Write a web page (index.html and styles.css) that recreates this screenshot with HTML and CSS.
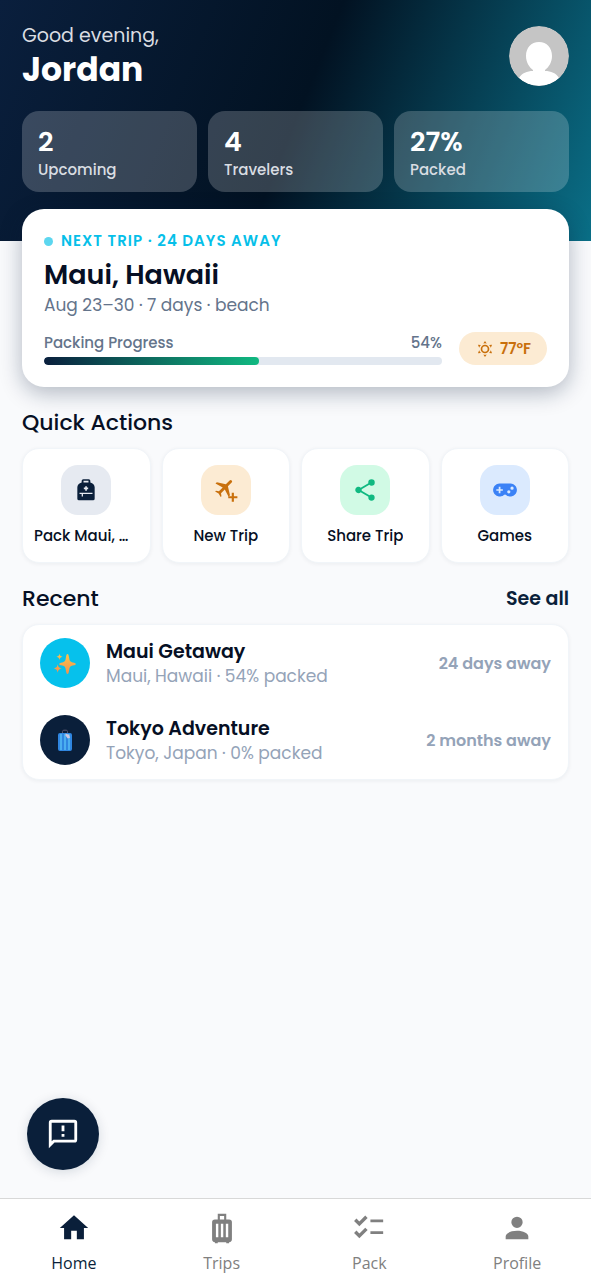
FILE: index.html
```html
<!DOCTYPE html>
<html lang="en">
<head>
<meta charset="utf-8">
<meta name="viewport" content="width=device-width, initial-scale=1">
<title>Home</title>
<link rel="stylesheet" href="styles.css">
</head>
<body>
<header class="hero">
  <div class="hero-top">
    <div>
      <p class="greeting">Good evening,</p>
      <h1 class="name">Jordan</h1>
    </div>
    <button class="avatar" type="button" aria-label="Account">
      <svg viewBox="0 0 60 60"><circle cx="30" cy="30" r="30" fill="#c5c5c5"/><path d="M30 16c-8 0-13 6-13 14 0 6 3 11 7 14v1c-6 0-11 2-14 7a30 30 0 0 0 40 0c-3-5-8-7-14-7v-1c4-3 7-8 7-14 0-8-5-14-13-14z" fill="#fff"/></svg>
    </button>
  </div>
  <div class="stats">
    <div class="stat"><span class="stat-value">2</span><span class="stat-label">Upcoming</span></div>
    <div class="stat"><span class="stat-value">4</span><span class="stat-label">Travelers</span></div>
    <div class="stat"><span class="stat-value">27%</span><span class="stat-label">Packed</span></div>
  </div>
</header>

<main class="content">
  <section class="trip">
    <p class="trip-tag"><span class="dot"></span>NEXT TRIP · 24 DAYS AWAY</p>
    <h2 class="trip-title">Maui, Hawaii</h2>
    <p class="trip-meta">Aug 23–30 · 7 days · beach</p>
    <div class="trip-foot">
      <div class="progress">
        <div class="progress-head"><span>Packing Progress</span><span>54%</span></div>
        <div class="track"><div class="fill" style="width:54%"></div></div>
      </div>
      <span class="weather">
        <svg viewBox="0 0 24 24" width="16" height="16" fill="currentColor"><path fill-rule="evenodd" d="M12 5.500a6.500 6.500 0 1 1 0 13 6.500 6.500 0 0 1 0-13m0 2.500a4 4 0 1 0 0 8 4 4 0 0 0 0-8M12 0l2.600 3.700a10 10 0 0 0-5.200 0zM12 24l2.600-3.700a10 10 0 0 1-5.200 0zM1.400 5.700l4.500.4a9 9 0 0 0-2.600 4.100zM22.600 5.700l-4.500.4a9 9 0 0 1 2.600 4.100zM1.400 18.300l4.500-.4a9 9 0 0 1-2.600-4.100zM22.600 18.300l-4.500-.4a9 9 0 0 0 2.600-4.100z"/></svg>
        77°F
      </span>
    </div>
  </section>

  <h2 class="heading">Quick Actions</h2>
  <div class="actions">
    <button class="action" type="button">
      <span class="tile tile-navy"><svg viewBox="0 0 24 24" width="26" height="26"><path fill="#0a1f3a" fill-rule="evenodd" d="M9.500 2h5A1.500 1.500 0 0 1 16 3.500V5c2.400.5 4 2.300 4 4.500V20a1.500 1.500 0 0 1-1.500 1.500h-13A1.500 1.500 0 0 1 4 20V9.500C4 7.300 5.600 5.500 8 5V3.500A1.500 1.500 0 0 1 9.500 2m.2 1.500V5h4.600V3.500zM11.300 8.500v1.300H10v1.600h1.300v1.300h1.500v-1.300H14V9.800h-1.200V8.500zM6 14.500v1.200h2V18h1.200v-2.300H18v-1.200z"/></svg></span>
      <span class="action-label">Pack Maui, Hawaii</span>
    </button>
    <button class="action" type="button">
      <span class="tile tile-orange"><svg viewBox="0 0 24 24" width="26" height="26" fill="#c9700c"><path transform="translate(.5 -1.500) rotate(45 10 11) scale(.9)" d="M21 16v-2l-8-5V3.500a1.500 1.500 0 0 0-3 0V9l-8 5v2l8-2.500V19l-2.500 1.800V22l4-1 4 1v-1.200L13 19v-5.500z"/><path d="M17.300 14.500h2v3.200h3.200v2h-3.200v3.200h-2v-3.200h-3.200v-2h3.200z"/></svg></span>
      <span class="action-label">New Trip</span>
    </button>
    <button class="action" type="button">
      <span class="tile tile-green"><svg viewBox="0 0 24 24" width="26" height="26" fill="#10b981"><path d="M18 16.080c-.76 0-1.440.3-1.960.77L8.910 12.700c.05-.23.09-.46.09-.7s-.04-.47-.09-.7l7.050-4.110c.54.5 1.250.81 2.040.81a3 3 0 1 0-3-3c0 .24.04.47.09.7L8.040 9.810A3 3 0 1 0 6 15c.79 0 1.500-.31 2.040-.81l7.120 4.150c-.05.21-.08.43-.08.66a2.920 2.920 0 1 0 2.920-2.920z"/></svg></span>
      <span class="action-label">Share Trip</span>
    </button>
    <button class="action" type="button">
      <span class="tile tile-blue"><svg viewBox="0 0 24 24" width="26" height="26" fill="#3b82f6"><path fill-rule="evenodd" d="M7 6h10a6 6 0 1 1-4 10.500q-1-.8-2 0A6 6 0 1 1 7 6M6.200 9v2.200H4v1.600h2.200V15h1.600v-2.200H10v-1.600H7.800V9zM18.500 8.800a1.500 1.500 0 1 0 0 3 1.500 1.500 0 0 0 0-3m-3 3.400a1.500 1.500 0 1 0 0 3 1.500 1.500 0 0 0 0-3"/></svg></span>
      <span class="action-label">Games</span>
    </button>
  </div>

  <div class="heading-row">
    <h2 class="heading">Recent</h2>
    <a class="see-all" href="#">See all</a>
  </div>
  <div class="recent">
    <a class="row" href="#">
      <span class="badge badge-cyan"><svg viewBox="0 0 24 24" width="24" height="24"><defs><linearGradient id="spark" x1="0" y1="0" x2="0" y2="1"><stop offset="0" stop-color="#fcc44a"/><stop offset="1" stop-color="#f2914e"/></linearGradient></defs><g fill="url(#spark)"><path d="M14.500 3c.8 0 1.200 1 1.600 3.500.5 3.500 1 4.300 3.700 4.900 2 .4 3 .8 3 1.600s-1 1.200-3 1.600c-2.700.6-3.200 1.400-3.700 4.900-.4 2.500-.8 3.500-1.600 3.500s-1.200-1-1.600-3.500c-.5-3.500-1-4.300-3.700-4.900-2-.4-3-.8-3-1.600s1-1.200 3-1.600c2.700-.6 3.200-1.400 3.700-4.900C13.300 4 13.700 3 14.500 3z"/><path d="M6.500 2.500c.5 2.400.8 2.700 3 3.300-2.200.6-2.500.9-3 3.300-.5-2.400-.8-2.700-3-3.300 2.200-.6 2.500-.9 3-3.300zM4.700 13.300c.7 2.900 1.200 3.400 4 4.200-2.800.8-3.300 1.300-4 4.200-.7-2.900-1.200-3.400-4-4.200 2.800-.8 3.300-1.300 4-4.200z"/></g></svg></span>
      <span class="row-text"><span class="row-title">Maui Getaway</span><span class="row-sub">Maui, Hawaii · 54% packed</span></span>
      <span class="row-when">24 days away</span>
    </a>
    <a class="row" href="#">
      <span class="badge badge-navy"><svg viewBox="0 0 24 24" width="24" height="24"><path d="M9.500 6V3.500c0-.8.500-1.300 1.300-1.300h2.400c.8 0 1.300.5 1.300 1.300V6" fill="none" stroke="#5a5872"/><rect x="5" y="5" width="14" height="18" rx="2" fill="#2f86e0"/><path d="M8 6v16M12 6v16M16 6v16" stroke="#55bdf5" stroke-width="1.500"/><path d="M12.500 5.500l3.500 1.300 1 3-2.300.6-2.200-2.800z" fill="#cfc8e0"/></svg></span>
      <span class="row-text"><span class="row-title">Tokyo Adventure</span><span class="row-sub">Tokyo, Japan · 0% packed</span></span>
      <span class="row-when">2 months away</span>
    </a>
  </div>

  <button class="feedback" type="button" aria-label="Send feedback">
    <svg viewBox="0 0 24 24" width="34" height="34" fill="#fff"><path d="M20 2H4a2 2 0 0 0-2 2v18l4-4h14a2 2 0 0 0 2-2V4a2 2 0 0 0-2-2m0 14H5.200L4 17.200V4h16zm-9-4h2v2h-2zm0-6h2v4h-2z"/></svg>
  </button>
</main>

<nav class="tabs">
  <a class="tab tab-active" href="#"><svg viewBox="0 0 24 24" width="34" height="34" fill="currentColor"><path d="M10 20v-6h4v6h5v-8h3L12 3 2 12h3v8z"/></svg>Home</a>
  <a class="tab" href="#"><svg viewBox="0 0 24 24" width="34" height="34" fill="currentColor"><path fill-rule="evenodd" d="M9 2h6v4h2a2 2 0 0 1 2 2v12a2 2 0 0 1-2 2v.8h-2V22H9v.8H7V22a2 2 0 0 1-2-2V8a2 2 0 0 1 2-2h2zm1.500 1.500V6h3V3.500zM7.700 9v9.500h1.700V9zm3.500 0v9.500h1.700V9zm3.500 0v9.500h1.700V9z"/></svg>Trips</a>
  <a class="tab" href="#"><svg viewBox="0 0 24 24" width="34" height="34" fill="none" stroke="currentColor" stroke-width="2"><path stroke-width="2.400" d="M2.300 6.200l2.900 2.900 5-5M2.300 14.700l2.900 2.900 5-5"/><path d="M13 7h9M13 15.300h9"/></svg>Pack</a>
  <a class="tab" href="#"><svg viewBox="0 0 24 24" width="34" height="34" fill="currentColor"><path d="M12 4a4 4 0 1 1 0 8 4 4 0 0 1 0-8m0 10c4.400 0 8 1.800 8 4v2H4v-2c0-2.200 3.600-4 8-4"/></svg>Profile</a>
</nav>
</body>
</html>
```
FILE: styles.css
```css
* { box-sizing: border-box; }
body {
  margin: 0;
  min-height: 100vh;
  display: flex;
  flex-direction: column;
  background: #f9fafc;
  color: #060f24;
  font-family: Poppins, Inter, "Open Sans", sans-serif;
}
h1, h2, p { margin: 0; }
a { color: inherit; text-decoration: none; }
button { font: inherit; color: inherit; border: 0; padding: 0; cursor: pointer; }
svg { display: block; flex: none; }

.hero {
  padding: 20px 22px 49px;
  color: #fff;
  background: linear-gradient(112deg, #0a1f3d 0%, #021222 50%, #0a6f87 100%);
}
.hero-top { display: flex; justify-content: space-between; align-items: center; min-height: 72px; }
.greeting { font-size: 19px; line-height: 28px; color: #dadde2; }
.name { font-size: 33px; line-height: 40px; font-weight: 700; }
.avatar { width: 60px; height: 60px; border-radius: 50%; overflow: hidden; background: none; }
.stats { display: grid; grid-template-columns: repeat(3, 1fr); gap: 11px; margin-top: 19px; }
.stat {
  display: flex;
  flex-direction: column;
  padding: 14px 16px 11px;
  border-radius: 17px;
  background: rgba(255, 255, 255, .2);
}
.stat-value { font-size: 27px; line-height: 33px; font-weight: 600; }
.stat-label { font-size: 15px; line-height: 23px; font-weight: 500; color: #d9dde2; }

.content { position: relative; flex: 1; padding: 0 22px; }
.trip {
  margin-top: -32px;
  padding: 22px;
  border-radius: 22px;
  background: #fff;
  box-shadow: 0 6px 22px rgba(10, 31, 58, .3);
}
.trip-tag {
  display: flex;
  align-items: center;
  gap: 8px;
  font-size: 15px;
  line-height: 20px;
  font-weight: 600;
  letter-spacing: 1px;
  color: #06bfe9;
}
.dot { width: 9px; height: 9px; border-radius: 50%; background: #5cd6ef; }
.trip-title { margin-top: 6px; font-size: 27px; line-height: 36px; font-weight: 600; }
.trip-meta { font-size: 17px; line-height: 24px; color: #64748b; }
.trip-foot { display: flex; align-items: center; gap: 17px; margin-top: 15px; }
.progress { flex: 1; }
.progress-head {
  display: flex;
  justify-content: space-between;
  margin-bottom: 4px;
  font-size: 15px;
  line-height: 20px;
  font-weight: 500;
  color: #64748b;
}
.track { height: 8px; border-radius: 4px; background: #e2e8f0; overflow: hidden; }
.fill { height: 100%; border-radius: 4px; background: linear-gradient(90deg, #0a1f3d, #10b981); }
.weather {
  display: flex;
  align-items: center;
  gap: 7px;
  padding: 0 16px 0 18px;
  border-radius: 17px;
  background: #fcebd3;
  color: #c9700c;
  font-size: 15px;
  line-height: 33px;
  font-weight: 600;
}

.heading { font-size: 22px; line-height: 32px; font-weight: 500; }
.trip + .heading { margin-top: 20px; }
.actions { display: grid; grid-template-columns: repeat(4, minmax(0, 1fr)); gap: 11px; margin-top: 9px; }
.action {
  display: flex;
  flex-direction: column;
  align-items: center;
  gap: 10px;
  padding: 16px 11px 15px;
  border: 1px solid #f1f5f9;
  border-radius: 17px;
  background: #fff;
  box-shadow: 0 1px 4px rgba(10, 31, 58, .06);
}
.tile { display: grid; place-items: center; width: 50px; height: 50px; border-radius: 17px; }
.tile-navy { background: #e6eaf1; }
.tile-orange { background: #fcebd3; }
.tile-green { background: #d1fae5; }
.tile-blue { background: #dbeafe; }
.action-label {
  max-width: 100%;
  overflow: hidden;
  text-overflow: ellipsis;
  white-space: nowrap;
  font-size: 15px;
  line-height: 22px;
  font-weight: 500;
}

.heading-row { display: flex; justify-content: space-between; align-items: center; margin-top: 20px; }
.see-all { font-size: 19px; line-height: 32px; font-weight: 600; color: #0a1f3a; }
.recent {
  margin-top: 9px;
  border: 1px solid #f1f5f9;
  border-radius: 17px;
  background: #fff;
  box-shadow: 0 1px 4px rgba(10, 31, 58, .06);
}
.row { display: flex; align-items: center; gap: 16px; padding: 13px 17px 14px; }
.badge { display: grid; place-items: center; flex: none; width: 50px; height: 50px; border-radius: 50%; }
.badge-cyan { background: #06c1ec; }
.badge-navy { background: #0a1f3a; }
.row-text { display: flex; flex-direction: column; flex: 1; padding-top: 2px; }
.row-title { font-size: 19px; line-height: 24px; font-weight: 600; }
.row-sub { font-size: 17px; line-height: 24px; color: #94a3b8; }
.row-when { font-size: 16px; font-weight: 600; color: #94a3b8; }

.feedback {
  position: absolute;
  left: 27px;
  bottom: 28px;
  display: grid;
  place-items: center;
  width: 72px;
  height: 72px;
  border-radius: 50%;
  background: #0a1f3a;
  box-shadow: 0 2px 12px rgba(10, 31, 58, .15);
}

.tabs {
  position: sticky;
  bottom: 0;
  display: grid;
  grid-template-columns: repeat(4, 1fr);
  border-top: 1px solid #d8d8d8;
  background: #fff;
}
.tab {
  display: flex;
  flex-direction: column;
  align-items: center;
  gap: 7px;
  padding: 12px 0 6px;
  font-family: "Segoe UI", "Open Sans", "Noto Sans", sans-serif;
  font-size: 16px;
  line-height: 22px;
  color: #808080;
}
.tab-active { color: #0a1f3a; }
```
